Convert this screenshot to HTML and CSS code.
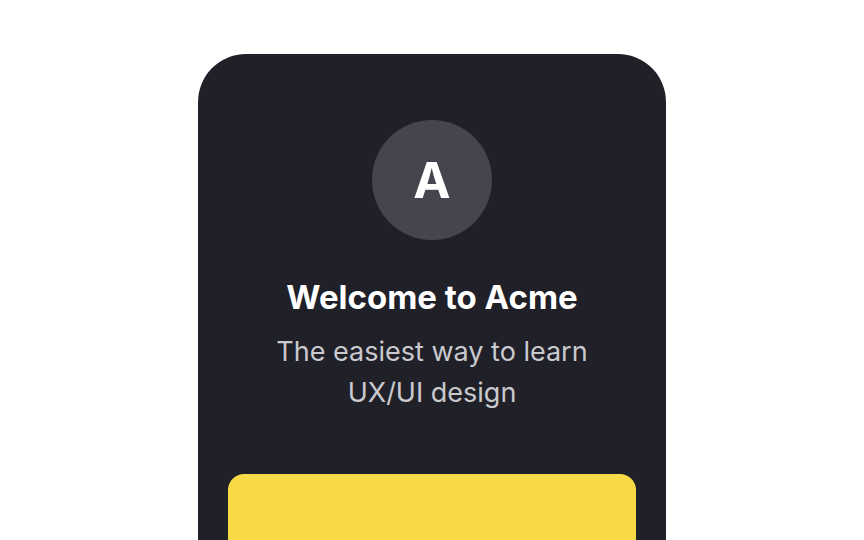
FILE: index.html
```html
<!DOCTYPE html>
<html>
<head>
<meta charset="utf-8">
<link rel="stylesheet" href="styles.css">
</head>
<body>
<div class="card">
  <div class="avatar">A</div>
  <h1 class="title">Welcome to Acme</h1>
  <p class="subtitle">The easiest way to learn<br>UX/UI design</p>
  <div class="cta"></div>
</div>
</body>
</html>
```
FILE: styles.css
```css
html, body {
  margin: 0;
  padding: 0;
  background: #ffffff;
  font-family: Inter, "Noto Sans", sans-serif;
  overflow: hidden;
  height: 540px;
}
.card {
  width: 468px;
  height: 486px;
  margin: 54px auto 0;
  box-sizing: border-box;
  background: #202028;
  border-radius: 48px 48px 0 0;
  padding: 66px 30px 0;
  display: flex;
  flex-direction: column;
  align-items: center;
  overflow: hidden;
}
.avatar {
  flex: none;
  width: 120px;
  height: 120px;
  border-radius: 50%;
  background: #45454d;
  color: #ffffff;
  font-size: 50px;
  font-weight: 700;
  display: flex;
  align-items: center;
  justify-content: center;
}
.title {
  margin: 37px 0 0;
  font-size: 33px;
  line-height: 40px;
  font-weight: 700;
  color: #ffffff;
  text-align: center;
}
.subtitle {
  margin: 14px 0 0;
  font-size: 27px;
  line-height: 41px;
  color: #c9c9ce;
  text-align: center;
}
.cta {
  flex: none;
  margin-top: 61px;
  width: 408px;
  height: 80px;
  border-radius: 16px;
  background: #f8da47;
}
```
